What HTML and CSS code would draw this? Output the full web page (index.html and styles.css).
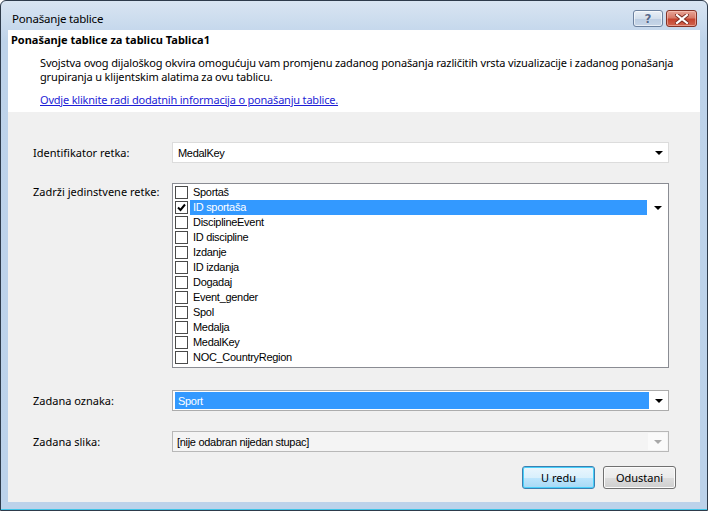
FILE: index.html
```html
<!DOCTYPE html>
<html lang="hr">

<head>
  <meta charset="UTF-8">
  <title>Ponašanje tablice</title>
  <link rel="stylesheet" href="styles.css">
</head>

<body>

  <div class="window">
    <!-- naslovna traka -->
    <div class="titlebar">
      <span class="title">Ponašanje tablice</span>
      <div class="caption-buttons">
        <div class="cap help">?</div>
        <div class="cap close">
          <svg width="14" height="10" viewBox="0 0 14 10">
            <path d="M2 1 L12 9 M12 1 L2 9" stroke="#7a2a20" stroke-width="4" stroke-linecap="square" />
            <path d="M2 1 L12 9 M12 1 L2 9" stroke="#fff" stroke-width="2.2" stroke-linecap="square" />
          </svg>
        </div>
      </div>
    </div>

    <div class="client">
      <!-- bijelo zaglavlje s opisom -->
      <div class="header">
        <div class="header-title">Ponašanje tablice za tablicu Tablica1</div>
        <p class="header-text">Svojstva ovog dijaloškog okvira omogućuju vam promjenu zadanog ponašanja različitih vrsta vizualizacije i zadanog ponašanja<br>grupiranja u klijentskim alatima za ovu tablicu.</p>
        <a class="header-link" href="#">Ovdje kliknite radi dodatnih informacija o ponašanju tablice.</a>
      </div>

      <div class="form">
        <div class="row row-id">
          <label class="label">Identifikator retka:</label>
          <div class="combo">
            <span class="combo-text">MedalKey</span>
            <span class="arrow"></span>
          </div>
        </div>

        <div class="row row-list">
          <label class="label label-top">Zadrži jedinstvene retke:</label>
          <div class="listbox">
            <div class="item"><span class="check"></span><span class="item-text">Sportaš</span></div>
            <div class="item selected">
              <span class="check checked">
                <svg width="11" height="11" viewBox="0 0 11 11"><path d="M2 5.5 L4.5 8 L9 2.5" fill="none" stroke="#000" stroke-width="2" /></svg>
              </span>
              <span class="item-text">ID sportaša</span>
              <span class="arrow"></span>
            </div>
            <div class="item"><span class="check"></span><span class="item-text">DisciplineEvent</span></div>
            <div class="item"><span class="check"></span><span class="item-text">ID discipline</span></div>
            <div class="item"><span class="check"></span><span class="item-text">Izdanje</span></div>
            <div class="item"><span class="check"></span><span class="item-text">ID izdanja</span></div>
            <div class="item"><span class="check"></span><span class="item-text">Dogadaj</span></div>
            <div class="item"><span class="check"></span><span class="item-text">Event_gender</span></div>
            <div class="item"><span class="check"></span><span class="item-text">Spol</span></div>
            <div class="item"><span class="check"></span><span class="item-text">Medalja</span></div>
            <div class="item"><span class="check"></span><span class="item-text">MedalKey</span></div>
            <div class="item"><span class="check"></span><span class="item-text">NOC_CountryRegion</span></div>
          </div>
        </div>

        <div class="row row-label">
          <label class="label">Zadana oznaka:</label>
          <div class="combo combo-focus">
            <span class="combo-text">Sport</span>
            <span class="arrow"></span>
          </div>
        </div>

        <div class="row row-image">
          <label class="label">Zadana slika:</label>
          <div class="combo combo-disabled">
            <span class="combo-text">[nije odabran nijedan stupac]</span>
            <span class="arrow"></span>
          </div>
        </div>

        <div class="buttons">
          <button class="btn btn-default">U redu</button>
          <button class="btn">Odustani</button>
        </div>
      </div>
    </div>
  </div>

</body>

</html>
```

FILE: styles.css
```css
/* osnovno */
body {
  margin: 0;
  padding: 0;
  background-color: #fff;
  font-family: "Liberation Sans", Arial, sans-serif;
  font-size: 12px;
  color: #000;
}

/* okvir prozora */
.window {
  width: 708px;
  height: 511px;
  box-sizing: border-box;
  border: 1px solid #2e3b4b;
  border-radius: 6px 6px 0 0;
  padding: 0 7px 8px;
  background: linear-gradient(#d9e5f2, #bed3ea 40px, #bcd2ea);
  box-shadow: inset 0 -1px 0 #3fc3e6;
  display: flex;
  flex-direction: column;
}

.titlebar {
  height: 29px;
  display: flex;
  align-items: flex-start;
  justify-content: space-between;
}

.title {
  padding: 10px 0 0 4px;
  font-family: "Noto Sans", sans-serif;
  font-size: 11.5px;
  letter-spacing: -0.2px;
  color: #000;
}

.caption-buttons {
  display: flex;
  gap: 3px;
  padding: 9px 3px 0 0;
}

.cap {
  width: 28px;
  height: 15px;
  border: 1px solid #6c819e;
  border-radius: 3px;
  display: flex;
  align-items: center;
  justify-content: center;
}

.help {
  background: linear-gradient(#eaf0f7, #d3dfec 50%, #bccde2 51%, #c7d6e8);
  font-family: "DejaVu Sans", sans-serif;
  font-weight: bold;
  font-size: 12px;
  color: #56698a;
  text-shadow: 0 0 1px #fff;
  box-shadow: inset 0 0 0 1px rgba(255, 255, 255, 0.6);
}

.close {
  width: 29px;
  border-color: #843226;
  background: linear-gradient(#e8a597, #d77a68 45%, #c5432e 55%, #d0654f);
  box-shadow: inset 0 0 0 1px rgba(255, 210, 200, 0.5);
}

/* klijentsko područje */
.client {
  flex: 1;
  display: flex;
  flex-direction: column;
  background-color: #f0f0f0;
}

.header {
  height: 82px;
  box-sizing: border-box;
  background-color: #fff;
  padding: 2px 0 0 3px;
  font-family: "Noto Sans", sans-serif;
}

.header-title {
  font-weight: bold;
  font-size: 11px;
  line-height: 16px;
}

.header-text {
  margin: 8px 0 0 29px;
  font-size: 11px;
  line-height: 14px;
  letter-spacing: -0.15px;
  white-space: nowrap;
}

.header-link {
  display: inline-block;
  margin: 9px 0 0 29px;
  font-size: 11px;
  line-height: 14px;
  letter-spacing: -0.2px;
  color: #1d1dd6;
}

.form {
  padding: 30px 0 0 25px;
  font-family: "Noto Sans", sans-serif;
}

.row {
  display: flex;
  align-items: center;
}

.row-list {
  align-items: flex-start;
  margin-top: 20px;
}

.row-label {
  margin-top: 22px;
}

.row-image {
  margin-top: 20px;
}

.label {
  width: 139px;
  font-size: 11px;
}

.label-top {
  padding-top: 1px;
}

/* padajući izbornici */
.combo {
  width: 497px;
  height: 21px;
  box-sizing: border-box;
  border: 1px solid #dcdcdc;
  background-color: #fff;
  display: flex;
  align-items: center;
  font-family: "Liberation Sans", Arial, sans-serif;
  font-size: 11px;
  letter-spacing: -0.3px;
}

.combo-text {
  flex: 1;
  padding-left: 5px;
}

.arrow {
  width: 19px;
  display: flex;
  justify-content: center;
}

.arrow::before {
  content: "";
  border-left: 4px solid transparent;
  border-right: 4px solid transparent;
  border-top: 4px solid #000;
}

.combo-focus {
  border-color: #acacac;
}

.combo-focus .combo-text {
  align-self: stretch;
  margin: 1px 0 1px 2px;
  padding-left: 3px;
  display: flex;
  align-items: center;
  background-color: #3399ff;
  color: #fff;
}

.combo-disabled {
  border-color: #b8b8b8;
  background-color: #f4f4f4;
}

.combo-disabled .combo-text {
  padding-left: 4px;
}

.combo-disabled .arrow {
  align-self: stretch;
  align-items: center;
  margin: 1px 1px 1px 0;
  background-color: #fafafa;
}

.combo-disabled .arrow::before {
  border-top-color: #a8a8a8;
}

/* popis s potvrdnim okvirima */
.listbox {
  width: 497px;
  height: 185px;
  box-sizing: border-box;
  border: 1px solid #8a8c93;
  background-color: #fff;
  padding: 1px 0 0 2px;
  font-family: "Liberation Sans", Arial, sans-serif;
  font-size: 11px;
  letter-spacing: -0.3px;
}

.item {
  height: 15px;
  display: flex;
  align-items: center;
}

.check {
  width: 13px;
  height: 13px;
  box-sizing: border-box;
  border: 1px solid #4a4a4a;
  background-color: #fff;
  display: flex;
  align-items: center;
  justify-content: center;
}

.item-text {
  width: 457px;
  height: 15px;
  line-height: 15px;
  margin-left: 2px;
  padding-left: 3px;
  box-sizing: border-box;
}

.item.selected .item-text {
  background-color: #3399ff;
  color: #fff;
}

.item.selected .arrow {
  width: 21px;
}

/* gumbi */
.buttons {
  display: flex;
  justify-content: flex-end;
  gap: 8px;
  margin: 14px 24px 0 0;
}

.btn {
  width: 73px;
  height: 23px;
  border: 1px solid #707070;
  border-radius: 3px;
  background: linear-gradient(#f2f2f2, #ebebeb 50%, #dddddd 51%, #cfcfcf);
  box-shadow: inset 0 0 0 1px #fbfbfb;
  font-family: "Noto Sans", sans-serif;
  font-size: 11px;
  color: #000;
  padding: 0;
}

.btn-default {
  border-color: #3c7fb1;
  background: linear-gradient(#eaf6fd, #d9f0fc 50%, #bee6fd 51%, #a7d9f5);
  box-shadow: inset 0 0 0 1px #48d0fa;
}
```
